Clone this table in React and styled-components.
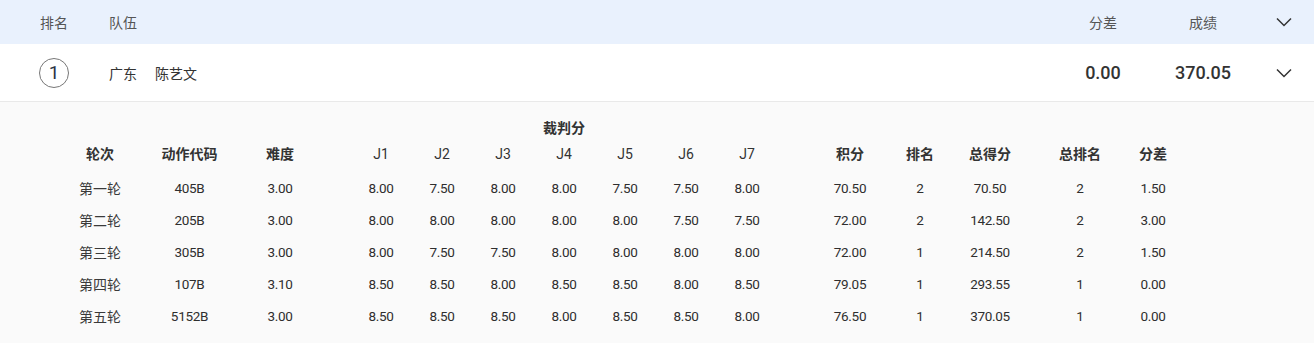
import React from "react";
import styled, { createGlobalStyle } from "styled-components";

const GlobalStyle = createGlobalStyle`
  * { box-sizing: border-box; }
  html, body { margin: 0; padding: 0; background: #ffffff; }
  body { font-family: "Noto Sans CJK SC", sans-serif; color: #333; }
`;

const NUM = `Roboto, "Noto Sans CJK SC", sans-serif`;
const CJK = `"Noto Sans CJK SC", sans-serif`;

const Page = styled.div`
  width: 1314px;
`;

const MainGrid = styled.div`
  display: grid;
  grid-template-columns: 30px 1fr 100px 100px 61px;
  align-items: center;
  padding-left: 39px;
`;

const HeaderBar = styled(MainGrid)`
  height: 44px;
  background: #e9f1fd;
  font-size: 14px;
  color: #555;
`;

const TeamRow = styled(MainGrid)`
  height: 58px;
  background: #fff;
  border-bottom: 1px solid #e9e9e9;
  font-size: 14px;
  color: #333;
`;

const CenterCell = styled.div`
  display: flex;
  justify-content: center;
  align-items: center;
  white-space: nowrap;
`;

const TeamCell = styled.div`
  display: flex;
  gap: 18px;
  padding-left: 40px;
  white-space: nowrap;
`;

const RankCircle = styled.div`
  width: 30px;
  height: 30px;
  border-radius: 50%;
  border: 1px solid #777;
  display: flex;
  align-items: center;
  justify-content: center;
  font-family: Roboto, sans-serif;
  font-size: 19px;
  color: #2b3445;
`;

const BigNum = styled(CenterCell)`
  font-family: Roboto, sans-serif;
  font-size: 18px;
  font-weight: 500;
  color: #333;
`;

const Chevron = ({ className }) => (
  <svg className={className} width="16" height="10" viewBox="0 0 16 10">
    <polyline points="1,1.5 8,8.5 15,1.5" fill="none" stroke="#333" strokeWidth="1.5" />
  </svg>
);

const Detail = styled.div`
  background: #fafafa;
  padding: 12px 0 0 56px;
  height: 241px;
`;

const DetailGrid = styled.div`
  display: grid;
  grid-template-columns: 88px 91px 90px 25.5px repeat(7, 61px) 37.5px 70px 70px 70px 20px 70px 76px;
  grid-template-rows: 26px 32px repeat(5, 32px);
`;

const Cell = styled.div`
  grid-column: ${(p) => p.$col};
  grid-row: ${(p) => p.$row};
  display: flex;
  align-items: center;
  justify-content: center;
  white-space: nowrap;
  font-size: 13.5px;
  letter-spacing: -0.3px;
  color: #2e2e2e;
  font-family: ${NUM};
`;

const RoundCell = styled(Cell)`
  font-family: ${CJK};
  font-size: 14px;
  letter-spacing: 0;
  color: #3a3a3a;
`;

const GroupHead = styled(Cell)`
  font-weight: 700;
  font-size: 14px;
  letter-spacing: 0;
  color: #333;
  font-family: ${CJK};
`;

const ColHead = styled(Cell)`
  height: 26px;
  align-self: start;
  padding-top: ${(p) => (p.$bold ? 0 : 2)}px;
  font-weight: ${(p) => (p.$bold ? 700 : 400)};
  font-size: 14px;
  letter-spacing: 0;
  color: #333;
  font-family: ${(p) => (p.$bold ? CJK : NUM)};
`;

const TRACKS = [1, 2, 3, 5, 6, 7, 8, 9, 10, 11, 13, 14, 15, 17, 18];

const HEADERS = [
  { t: "轮次", b: true },
  { t: "动作代码", b: true },
  { t: "难度", b: true },
  { t: "J1" },
  { t: "J2" },
  { t: "J3" },
  { t: "J4" },
  { t: "J5" },
  { t: "J6" },
  { t: "J7" },
  { t: "积分", b: true },
  { t: "排名", b: true },
  { t: "总得分", b: true },
  { t: "总排名", b: true },
  { t: "分差", b: true },
];

const ROWS = [
  ["第一轮", "405B", "3.00", "8.00", "7.50", "8.00", "8.00", "7.50", "7.50", "8.00", "70.50", "2", "70.50", "2", "1.50"],
  ["第二轮", "205B", "3.00", "8.00", "8.00", "8.00", "8.00", "8.00", "7.50", "7.50", "72.00", "2", "142.50", "2", "3.00"],
  ["第三轮", "305B", "3.00", "8.00", "7.50", "7.50", "8.00", "8.00", "8.00", "8.00", "72.00", "1", "214.50", "2", "1.50"],
  ["第四轮", "107B", "3.10", "8.50", "8.50", "8.00", "8.50", "8.50", "8.00", "8.50", "79.05", "1", "293.55", "1", "0.00"],
  ["第五轮", "5152B", "3.00", "8.50", "8.50", "8.50", "8.00", "8.50", "8.50", "8.00", "76.50", "1", "370.05", "1", "0.00"],
];

export default function App() {
  return (
    <Page>
      <GlobalStyle />
      <HeaderBar>
        <CenterCell>排名</CenterCell>
        <TeamCell>队伍</TeamCell>
        <CenterCell>分差</CenterCell>
        <CenterCell>成绩</CenterCell>
        <CenterCell>
          <Chevron />
        </CenterCell>
      </HeaderBar>
      <TeamRow>
        <RankCircle>1</RankCircle>
        <TeamCell>
          <span>广东</span>
          <span>陈艺文</span>
        </TeamCell>
        <BigNum>0.00</BigNum>
        <BigNum>370.05</BigNum>
        <CenterCell>
          <Chevron />
        </CenterCell>
      </TeamRow>
      <Detail>
        <DetailGrid>
          <GroupHead $col="5 / 12" $row={1}>
            裁判分
          </GroupHead>
          {HEADERS.map((h, i) => (
            <ColHead key={h.t} $col={TRACKS[i]} $row={2} $bold={h.b}>
              {h.t}
            </ColHead>
          ))}
          {ROWS.map((r, ri) =>
            r.map((v, i) =>
              i === 0 ? (
                <RoundCell key={r[0] + i} $col={TRACKS[i]} $row={ri + 3}>
                  {v}
                </RoundCell>
              ) : (
                <Cell key={r[0] + i} $col={TRACKS[i]} $row={ri + 3}>
                  {v}
                </Cell>
              )
            )
          )}
        </DetailGrid>
      </Detail>
    </Page>
  );
}
